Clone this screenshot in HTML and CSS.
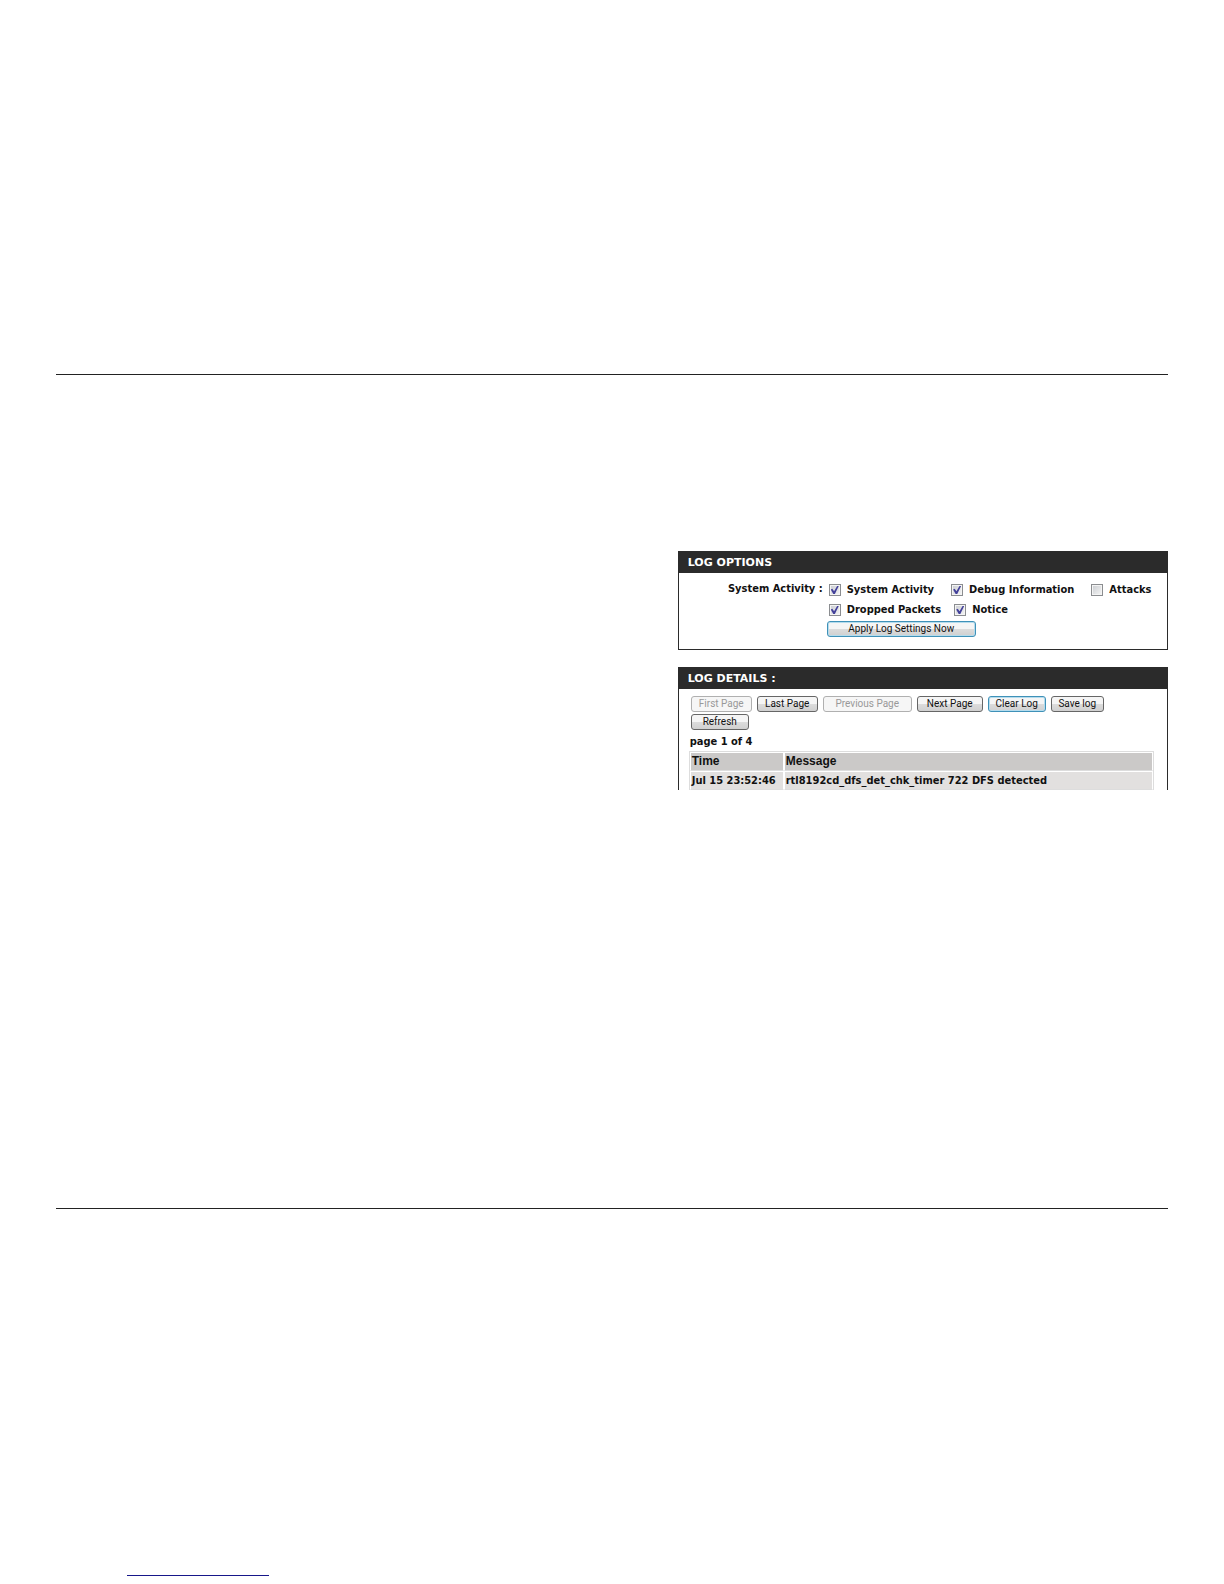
FILE: index.html
```
<!DOCTYPE html>
<html lang="en">
<head>
<meta charset="utf-8">
<title>Log</title>
<link rel="stylesheet" href="styles.css">
</head>
<body>
<main class="sheet">
  <div class="panels">
    <section class="panel">
      <h2 class="panel-title">LOG OPTIONS</h2>
      <form class="options">
        <span class="options-label">System Activity :</span>
        <div class="options-fields">
          <div class="checks">
            <label class="check"><input type="checkbox" checked>System Activity</label>
            <label class="check"><input type="checkbox" checked>Debug Information</label>
            <label class="check"><input type="checkbox">Attacks</label>
          </div>
          <div class="checks checks-short">
            <label class="check"><input type="checkbox" checked>Dropped Packets</label>
            <label class="check"><input type="checkbox" checked>Notice</label>
          </div>
          <button class="btn btn-focus btn-apply" type="button">Apply Log Settings Now</button>
        </div>
      </form>
    </section>
    <section class="panel panel-open">
      <h2 class="panel-title">LOG DETAILS :</h2>
      <div class="details">
        <div class="toolbar">
          <button class="btn" type="button" disabled>First Page</button>
          <button class="btn" type="button">Last Page</button>
          <button class="btn btn-wide" type="button" disabled>Previous Page</button>
          <button class="btn btn-next" type="button">Next Page</button>
          <button class="btn btn-focus btn-small" type="button">Clear Log</button>
          <button class="btn btn-save" type="button">Save log</button>
          <button class="btn btn-small" type="button">Refresh</button>
        </div>
        <p class="page-count">page 1 of 4</p>
        <table class="log">
          <thead><tr><th class="log-time">Time</th><th>Message</th></tr></thead>
          <tbody><tr><td>Jul 15 23:52:46</td><td>rtl8192cd_dfs_det_chk_timer 722 DFS detected</td></tr></tbody>
        </table>
      </div>
    </section>
  </div>
</main>
<footer class="footer"><a class="footer-link" href="#" aria-label="Footer link"></a></footer>
</body>
</html>
```
FILE: styles.css
```
* { box-sizing: border-box; }
body {
  margin: 0;
  padding-top: 374px;
  background: #fff;
  color: #111;
  font: bold 11px/18px "DejaVu Sans Condensed", "DejaVu Sans", sans-serif;
}
.sheet {
  margin: 0 56px;
  padding-top: 176px;
  min-height: 835px;
  border-top: 1px solid #222;
  border-bottom: 1px solid #222;
}
.panels {
  display: grid;
  gap: 17px;
  width: calc(44% + 1px);
  margin-left: auto;
}
.panel { border: 1px solid #2b2b2b; }
.panel-open { border-bottom: 0; }
.panel-title {
  margin: 0;
  padding: 1px 9px 0;
  background: #2b2b2b;
  color: #fff;
  font: bold 11px/20px "DejaVu Sans", sans-serif;
}
.options {
  display: grid;
  grid-template-columns: 144px 1fr;
  column-gap: 4px;
  padding: 7px 0 12px;
}
.options-label { text-align: right; white-space: nowrap; }
.checks { display: flex; gap: 17px; height: 20px; padding-left: 2px; }
.checks-short { gap: 13px; }
.check {
  display: flex;
  align-items: center;
  gap: 6px;
  height: 20px;
  white-space: nowrap;
}
.check input {
  appearance: none;
  width: 12px;
  height: 12px;
  margin: 0;
  border: 1px solid #8b8d90;
  background: linear-gradient(135deg, #c9ccd0, #f6f6f6);
  box-shadow: inset 0 0 0 1px #f4f4f4;
  display: grid;
  place-items: center;
}
.check input:checked::before {
  content: "";
  width: 8px;
  height: 8px;
  background: #43419a;
  clip-path: polygon(0 45%, 20% 35%, 42% 65%, 80% 0, 100% 0, 52% 100%, 32% 100%);
}
.btn {
  width: 61px;
  height: 16px;
  padding: 0;
  border: 1px solid #666;
  border-radius: 3px;
  background: linear-gradient(#f5f5f5 50%, #dcdcdc 50%, #d0d0d0);
  color: #111;
  font: 10px/14px Roboto, sans-serif;
  white-space: nowrap;
}
.btn:disabled { border-color: #b0b0b0; background: #f6f6f6; color: #999; }
.btn-focus { border-color: #3f91b8; box-shadow: inset 0 0 0 1px #b5dced; }
.btn-wide { width: 89px; }
.btn-next { width: 66px; }
.btn-small { width: 58px; }
.btn-save { width: 53px; }
.btn-apply { display: block; width: 149px; margin-top: 1px; }
.details { padding: 7px 13px 0 10px; }
.toolbar { display: flex; flex-wrap: wrap; gap: 2px 5px; padding-left: 2px; }
.page-count { margin: 3px 0 0; padding-left: 1px; }
.log {
  width: 100%;
  border: 1px solid #ddd;
  border-bottom: 0;
  border-spacing: 0;
  border-collapse: separate;
}
.log th, .log td {
  height: 19px;
  padding: 0 1px;
  border: 1px solid #fff;
  border-bottom: 1px solid #ddd;
  background: #cbc9c8;
  background-clip: padding-box;
  line-height: 17px;
  text-align: left;
}
.log th { font-family: "Liberation Sans", sans-serif; font-size: 12px; }
.log td { background-color: #e2e0df; }
.log .log-time { width: 94px; }
.footer { padding: 352px 127px 8px; }
.footer-link {
  display: block;
  width: 142px;
  height: 15px;
  border-bottom: 1px solid #17178a;
}
```
